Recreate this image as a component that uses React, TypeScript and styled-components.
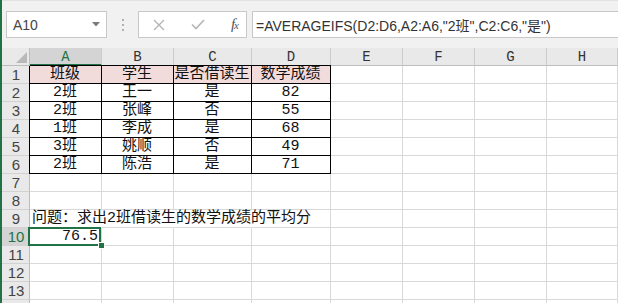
import React from "react";
import styled, { createGlobalStyle, css } from "styled-components";

const GlobalStyle = createGlobalStyle`
  html, body { margin: 0; padding: 0; background: #ffffff; overflow: hidden; }
  * { box-sizing: border-box; }
`;

const GREEN = "#217346";
const CJK = `"Noto Sans CJK SC", sans-serif`;

const Frame = styled.div`
  width: 618px;
  height: 303px;
  overflow: hidden;
  border-left: 2px solid ${GREEN};
  background: #ffffff;
  display: flex;
  flex-direction: column;
`;

const Toolbar = styled.div`
  height: 48px;
  flex: none;
  background: #f1f1f1;
  border-top: 1px solid #e2e2e2;
  display: flex;
  align-items: flex-start;
  padding: 10px 0 0 4px;
`;

const Box = styled.div`
  height: 27px;
  background: #ffffff;
  border: 1px solid #c8c8c8;
  display: flex;
  align-items: center;
`;

const NameBox = styled(Box)`
  width: 101px;
  padding: 0 6px 0 6px;
  justify-content: space-between;
`;

const NameText = styled.span`
  font-family: "Liberation Sans", Arial, sans-serif;
  font-size: 14px;
  color: #444;
`;

const Grip = styled.div`
  width: 31px;
  height: 27px;
  display: flex;
  align-items: center;
  justify-content: center;
`;

const FxBox = styled(Box)`
  width: 109px;
  padding: 0 8px 0 14px;
  justify-content: space-between;
`;

const FxLabel = styled.span`
  font-family: "Liberation Serif", "Times New Roman", serif;
  font-style: italic;
  font-size: 15px;
  color: #555;
  letter-spacing: -1px;
  & > small { font-size: 11px; }
`;

const FormulaBox = styled(Box)`
  flex: 1;
  margin-left: 5px;
  border-right: none;
  padding-left: 3px;
  font-family: "Liberation Sans", Arial, ${CJK};
  font-size: 14px;
  color: #333;
  white-space: nowrap;
`;

const Sheet = styled.div`
  display: grid;
  grid-template-columns: 28px 72px 72px 78px 79px 72px 72px 72px 1fr;
  grid-auto-rows: 18px;
`;

const Corner = styled.div`
  background: #e9e9e9;
  border-right: 1px solid #bdbdbd;
  border-bottom: 1px solid #bdbdbd;
  display: flex;
  align-items: flex-end;
  justify-content: flex-end;
  padding: 0 2px 2px 0;
`;

const ColHead = styled.div<{ $active?: boolean }>`
  background: ${(p) => (p.$active ? "#d4d4d4" : "#e9e9e9")};
  border-right: 1px solid #cccccc;
  border-bottom: ${(p) => (p.$active ? `2px solid ${GREEN}` : "1px solid #bdbdbd")};
  color: ${(p) => (p.$active ? GREEN : "#333")};
  font-family: "Liberation Mono", "Courier New", monospace;
  font-size: 14px;
  display: flex;
  align-items: center;
  justify-content: center;
  padding-top: ${(p) => (p.$active ? "1px" : "0")};
`;

const RowHead = styled.div<{ $active?: boolean }>`
  background: ${(p) => (p.$active ? "#d4d4d4" : "#e9e9e9")};
  border-right: ${(p) => (p.$active ? `1px solid ${GREEN}` : "1px solid #bdbdbd")};
  border-bottom: 1px solid #d2d2d2;
  color: ${(p) => (p.$active ? GREEN : "#444")};
  font-family: "Liberation Sans", Arial, sans-serif;
  font-size: 15px;
  display: flex;
  align-items: center;
  justify-content: center;
  padding-left: 1px;
`;

const Cell = styled.div<{
  $boxed?: boolean;
  $fill?: string;
  $align?: "left" | "center" | "right";
  $firstCol?: boolean;
  $firstRow?: boolean;
  $hideRight?: boolean;
  $selected?: boolean;
}>`
  position: relative;
  background: ${(p) => p.$fill || "transparent"};
  border-right: 1px solid ${(p) => (p.$boxed ? "#000" : p.$hideRight ? "transparent" : "#d9d9d9")};
  border-bottom: 1px solid ${(p) => (p.$boxed ? "#000" : "#d9d9d9")};
  font-family: "Liberation Mono", ${CJK};
  font-size: 15px;
  line-height: 17px;
  color: #111;
  white-space: nowrap;
  display: flex;
  align-items: center;
  justify-content: ${(p) =>
    p.$align === "center" ? "center" : p.$align === "right" ? "flex-end" : "flex-start"};
  padding: 0 3px 0 2px;
  ${(p) =>
    (p.$firstCol || p.$firstRow) &&
    css`
      box-shadow: ${[p.$firstCol ? "-1px 0 0 #000" : "", p.$firstRow ? "0 -1px 0 #000" : ""]
        .filter(Boolean)
        .join(", ")};
    `}
  ${(p) =>
    p.$selected &&
    css`
      &::after {
        content: "";
        position: absolute;
        left: -2px;
        right: 0;
        top: -1px;
        bottom: -1px;
        border: 2px solid ${GREEN};
        z-index: 2;
      }
    `}
`;

const FillHandle = styled.span`
  position: absolute;
  right: -4px;
  bottom: -4px;
  width: 7px;
  height: 7px;
  background: ${GREEN};
  border: 1px solid #ffffff;
  z-index: 3;
`;

const COLS = ["A", "B", "C", "D", "E", "F", "G", "H"];

const table: string[][] = [
  ["班级", "学生", "是否借读生", "数学成绩"],
  ["2班", "王一", "是", "82"],
  ["2班", "张峰", "否", "55"],
  ["1班", "李成", "是", "68"],
  ["3班", "姚顺", "否", "49"],
  ["2班", "陈浩", "是", "71"],
];

const Caret = () => (
  <svg width="8" height="5" viewBox="0 0 8 5">
    <polygon points="0,0 8,0 4,4.5" fill="#7a7a7a" />
  </svg>
);

const Dots = () => (
  <svg width="4" height="14" viewBox="0 0 4 14">
    <rect x="1" y="1" width="2" height="2" fill="#b0b0b0" />
    <rect x="1" y="6" width="2" height="2" fill="#b0b0b0" />
    <rect x="1" y="11" width="2" height="2" fill="#b0b0b0" />
  </svg>
);

const XIcon = () => (
  <svg width="12" height="12" viewBox="0 0 12 12">
    <path d="M1 1 L11 11 M11 1 L1 11" stroke="#b5b5b5" strokeWidth="1.4" fill="none" />
  </svg>
);

const CheckIcon = () => (
  <svg width="14" height="11" viewBox="0 0 14 11">
    <path d="M1 5.5 L5 9.5 L13 1" stroke="#b5b5b5" strokeWidth="1.6" fill="none" />
  </svg>
);

const CornerTriangle = () => (
  <svg width="11" height="11" viewBox="0 0 11 11">
    <polygon points="11,0 11,11 0,11" fill="#b9b9b9" />
  </svg>
);

export default function App() {
  const rows = [];
  for (let r = 1; r <= 14; r++) {
    const cells = [];
    for (let c = 0; c < 8; c++) {
      const inTable = r <= 6 && c < 4;
      const text = inTable ? table[r - 1][c] : "";
      if (r === 9 && c === 0) {
        cells.push(
          <Cell key={c} $hideRight>
            问题：求出2班借读生的数学成绩的平均分
          </Cell>
        );
        continue;
      }
      if (r === 10 && c === 0) {
        cells.push(
          <Cell key={c} $align="right" $selected>
            76.5
            <FillHandle />
          </Cell>
        );
        continue;
      }
      cells.push(
        <Cell
          key={c}
          $boxed={inTable}
          $fill={inTable && r === 1 ? "#f2dcdb" : undefined}
          $align={inTable ? "center" : "left"}
          $firstCol={inTable && c === 0}
          $firstRow={inTable && r === 1}
          $hideRight={r === 9 && (c === 1 || c === 2)}
        >
          {text}
        </Cell>
      );
    }
    rows.push(
      <React.Fragment key={r}>
        <RowHead $active={r === 10}>{r <= 13 ? r : ""}</RowHead>
        {cells}
      </React.Fragment>
    );
  }

  return (
    <>
      <GlobalStyle />
      <Frame>
        <Toolbar>
          <NameBox>
            <NameText>A10</NameText>
            <Caret />
          </NameBox>
          <Grip>
            <Dots />
          </Grip>
          <FxBox>
            <XIcon />
            <CheckIcon />
            <FxLabel>
              f<small>x</small>
            </FxLabel>
          </FxBox>
          <FormulaBox>=AVERAGEIFS(D2:D6,A2:A6,"2班",C2:C6,"是")</FormulaBox>
        </Toolbar>
        <Sheet>
          <Corner>
            <CornerTriangle />
          </Corner>
          {COLS.map((c) => (
            <ColHead key={c} $active={c === "A"}>
              {c}
            </ColHead>
          ))}
          {rows}
        </Sheet>
      </Frame>
    </>
  );
}
